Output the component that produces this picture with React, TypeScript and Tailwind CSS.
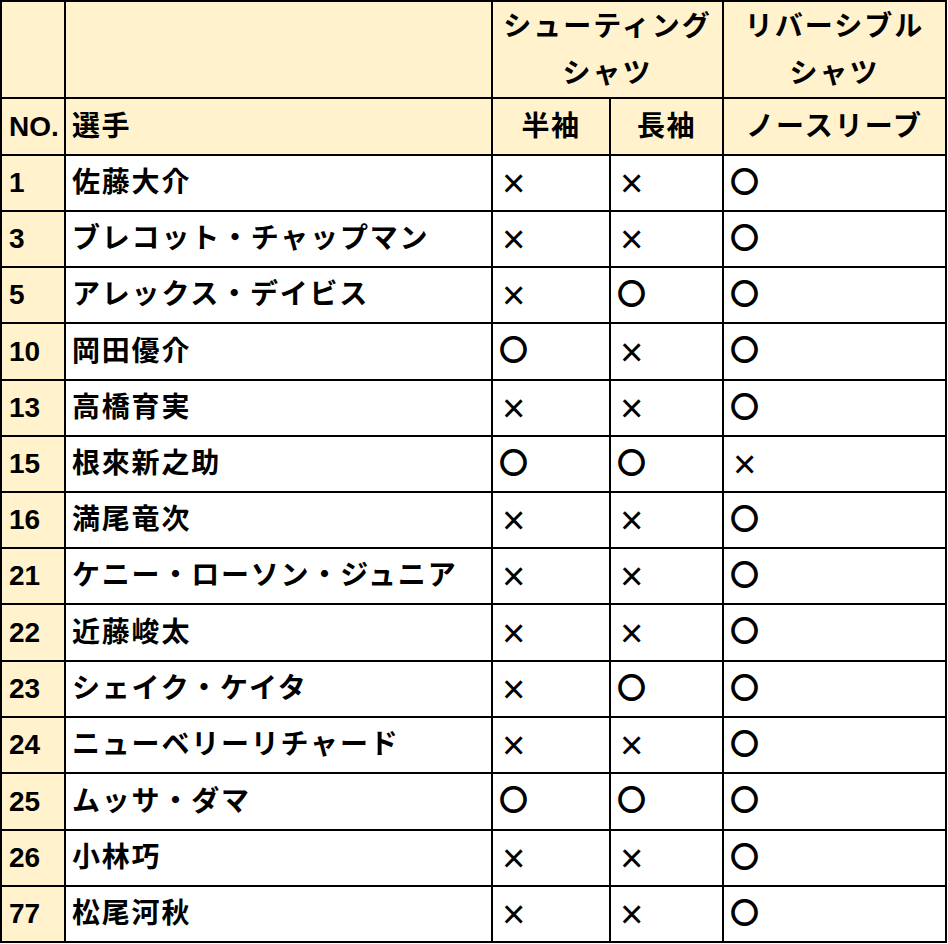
import React from "react";

type Row = { no: string; name: string; a: string; b: string; c: string; h: string };

const rows: Row[] = [
  { no: "1", name: "佐藤大介", a: "x", b: "x", c: "o", h: "h-[54px]" },
  { no: "3", name: "ブレコット・チャップマン", a: "x", b: "x", c: "o", h: "h-[54px]" },
  { no: "5", name: "アレックス・デイビス", a: "x", b: "o", c: "o", h: "h-[54px]" },
  { no: "10", name: "岡田優介", a: "o", b: "x", c: "o", h: "h-[55px]" },
  { no: "13", name: "高橋育実", a: "x", b: "x", c: "o", h: "h-[54px]" },
  { no: "15", name: "根來新之助", a: "o", b: "o", c: "x", h: "h-[54px]" },
  { no: "16", name: "満尾竜次", a: "x", b: "x", c: "o", h: "h-[54px]" },
  { no: "21", name: "ケニー・ローソン・ジュニア", a: "x", b: "x", c: "o", h: "h-[54px]" },
  { no: "22", name: "近藤峻太", a: "x", b: "x", c: "o", h: "h-[55px]" },
  { no: "23", name: "シェイク・ケイタ", a: "x", b: "o", c: "o", h: "h-[54px]" },
  { no: "24", name: "ニューベリーリチャード", a: "x", b: "x", c: "o", h: "h-[54px]" },
  { no: "25", name: "ムッサ・ダマ", a: "o", b: "o", c: "o", h: "h-[55px]" },
  { no: "26", name: "小林巧", a: "x", b: "x", c: "o", h: "h-[54px]" },
  { no: "77", name: "松尾河秋", a: "x", b: "x", c: "o", h: "h-[54px]" },
];

function Mark({ v }: { v: string }) {
  if (v === "o") {
    return <span className="font-bold text-[29px] leading-none">〇</span>;
  }
  return <span className="font-normal text-[40px] leading-none pl-[3px]">×</span>;
}

export default function App() {
  return (
    <div className="bg-white w-[948px] h-[944px] font-['Liberation_Sans','Noto_Sans_CJK_JP',sans-serif] text-black">
      <div className="grid w-[947px] grid-cols-[62px_425px_116px_111px_221px] gap-[2px] bg-black p-[2px] text-[28px] font-bold">
        {/* header row 1 */}
        <div className="h-[95px] bg-[#fff2cc]" />
        <div className="h-[95px] bg-[#fff2cc]" />
        <div className="col-span-2 h-[95px] bg-[#fff2cc] flex flex-col items-center justify-center leading-[47px] tracking-[2px]">
          <span>シューティング</span>
          <span>シャツ</span>
        </div>
        <div className="h-[95px] bg-[#fff2cc] flex flex-col items-center justify-center leading-[47px] tracking-[2px]">
          <span>リバーシブル</span>
          <span>シャツ</span>
        </div>
        {/* header row 2 */}
        <div className="h-[55px] bg-[#fff2cc] flex items-center pl-[7px]">NO.</div>
        <div className="h-[55px] bg-[#fff2cc] flex items-center pl-[6px] tracking-[1.5px]">選手</div>
        <div className="h-[55px] bg-[#fff2cc] flex items-center justify-center tracking-[1.5px]">半袖</div>
        <div className="h-[55px] bg-[#fff2cc] flex items-center justify-center tracking-[1.5px]">長袖</div>
        <div className="h-[55px] bg-[#fff2cc] flex items-center justify-center tracking-[2px]">ノースリーブ</div>
        {rows.map((r) => (
          <React.Fragment key={r.no}>
            <div className={`${r.h} bg-[#fff2cc] flex items-center pl-[7px]`}>{r.no}</div>
            <div className={`${r.h} bg-white flex items-center pl-[6px] tracking-[1.8px] whitespace-nowrap`}>{r.name}</div>
            <div className={`${r.h} bg-white flex items-center pl-[6px]`}><Mark v={r.a} /></div>
            <div className={`${r.h} bg-white flex items-center pl-[6px]`}><Mark v={r.b} /></div>
            <div className={`${r.h} bg-white flex items-center pl-[6px]`}><Mark v={r.c} /></div>
          </React.Fragment>
        ))}
      </div>
    </div>
  );
}
